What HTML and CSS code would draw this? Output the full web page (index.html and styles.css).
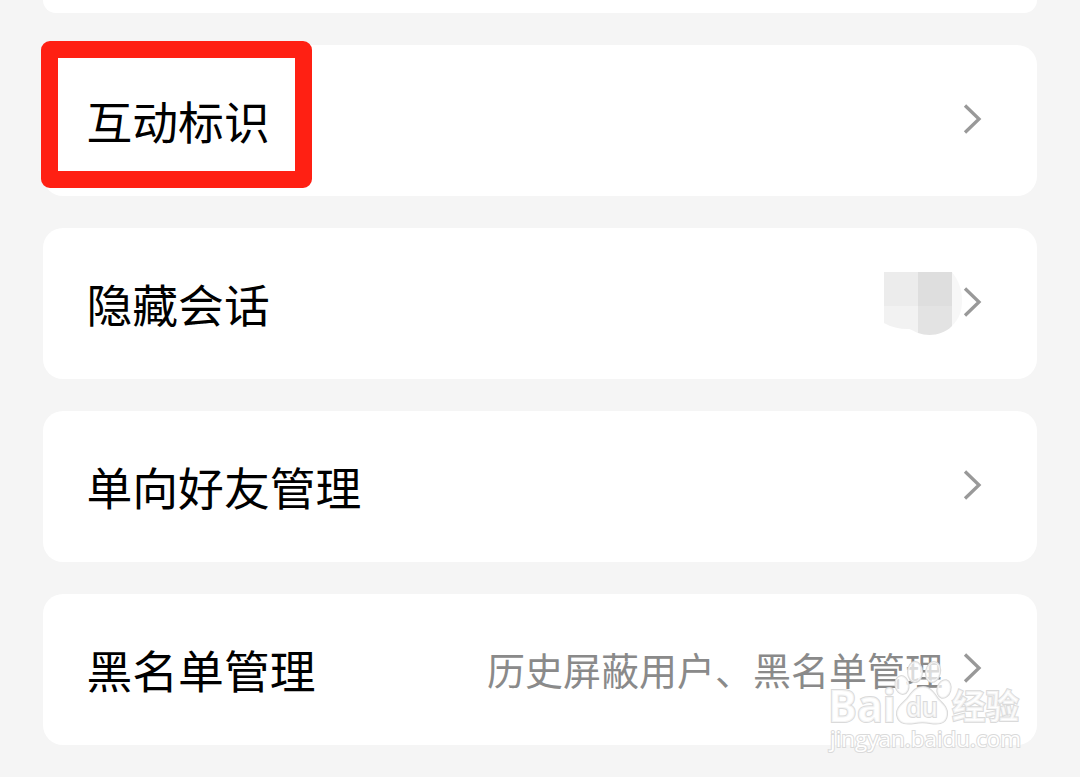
FILE: index.html
```html
<!DOCTYPE html>
<html lang="zh-CN">
<head>
    <meta charset="UTF-8">
    <title>设置</title>
    <link rel="stylesheet" href="styles.css">
</head>
<body>
    <div class="settings">
        <div class="card card-prev"></div>

        <div class="card">
            <span class="label">互动标识</span>
            <svg class="arrow" viewBox="0 0 20 32"><path d="M3 2.5 L17 16 L3 29.5"/></svg>
            <div class="highlight"></div>
        </div>

        <div class="card">
            <span class="label">隐藏会话</span>
            <!-- pixelated avatar -->
            <svg class="mosaic" viewBox="0 0 78 64">
                <path fill="#f7f7f7" d="M68 0 C75 9 78 18 78 29 C78 39 75 47 68 54 Z"/>
                <path fill="#ececec" d="M0 0 H34 V34 H0 Z"/>
                <path fill="#f2f2f2" d="M0 34 H34 V61 C29 59 27 57 24 57 C15 57 7 55 0 51 Z"/>
                <path fill="#dedede" d="M34 0 H68 V34 H34 Z"/>
                <path fill="#e3e3e3" d="M34 34 H68 V54 C59 63 45 65 34 61 Z"/>
            </svg>
            <svg class="arrow" viewBox="0 0 20 32"><path d="M3 2.5 L17 16 L3 29.5"/></svg>
        </div>

        <div class="card">
            <span class="label">单向好友管理</span>
            <svg class="arrow" viewBox="0 0 20 32"><path d="M3 2.5 L17 16 L3 29.5"/></svg>
        </div>

        <div class="card">
            <span class="label">黑名单管理</span>
            <span class="hint">历史屏蔽用户、黑名单管理</span>
            <svg class="arrow" viewBox="0 0 20 32"><path d="M3 2.5 L17 16 L3 29.5"/></svg>
        </div>
    </div>

    <svg class="watermark" viewBox="0 0 210 120">
        <g class="mark">
            <text class="brand" x="4" y="80" textLength="68" lengthAdjust="spacingAndGlyphs">Bai</text>
            <ellipse cx="78" cy="43" rx="6.5" ry="9" transform="rotate(-10 78 43)"/>
            <ellipse cx="91" cy="30" rx="7" ry="10"/>
            <ellipse cx="109" cy="30" rx="7" ry="10" transform="rotate(12 109 30)"/>
            <ellipse cx="120" cy="47" rx="6.5" ry="9" transform="rotate(15 120 47)"/>
            <path d="M99 45 C106 45 110 51 114 57 C119 62 124 66 123 73 C122 83 112 82 106 81 C101 80 96 80 91 81 C84 82 75 83 73 73 C72 66 78 62 83 57 C88 51 91 45 99 45 Z"/>
            <text class="du" x="82" y="75" textLength="32" lengthAdjust="spacingAndGlyphs">du</text>
            <text class="jy" x="128" y="77" textLength="67" lengthAdjust="spacingAndGlyphs">经验</text>
        </g>
        <text class="site" x="6" y="105" textLength="191" lengthAdjust="spacingAndGlyphs">jingyan.baidu.com</text>
    </svg>
</body>
</html>
```

FILE: styles.css
```css
body {
    margin: 0;
    height: 777px;
    overflow: hidden;
    background-color: #f5f5f5;
    font-family: "Noto Sans CJK SC", sans-serif;
}

.settings {
    display: flex;
    flex-direction: column;
    gap: 32px;
    padding: 0 43px;
}

.card {
    position: relative;
    display: flex;
    align-items: center;
    box-sizing: border-box;
    height: 151px;
    padding: 0 55px 3px 43.5px;
    background-color: #fff;
    border-radius: 20px;
}

.card-prev {
    height: 13px;
    padding: 0;
    border-radius: 0 0 20px 20px;
}

.label {
    margin-right: auto;
    font-size: 45.8px;
    line-height: 60px;
    color: #000;
    padding-top: 1px;
}

.hint {
    margin-right: 19px;
    padding-top: 2px;
    font-size: 38px;
    line-height: 50px;
    color: #8a8a8a;
}

.arrow {
    width: 20px;
    height: 32px;
    fill: none;
    stroke: #999;
    stroke-width: 3.3;
}

.mosaic {
    width: 78px;
    height: 64px;
    padding-top: 3px;
}

.highlight {
    position: absolute;
    left: -2px;
    top: -4px;
    width: 237px;
    height: 113px;
    border: 17px solid #ff2013;
    border-radius: 9px;
}

.watermark {
    position: absolute;
    left: 824px;
    top: 642px;
    width: 210px;
    height: 120px;
    fill: #fff;
    stroke: #dadada;
    stroke-width: 2;
    paint-order: stroke;
}

.mark {
    fill-opacity: 0.7;
}

.brand {
    font-family: "Open Sans", sans-serif;
    font-size: 45px;
    font-weight: bold;
}

.du {
    font-family: "Open Sans", sans-serif;
    font-size: 27px;
    font-weight: 600;
}

.jy {
    font-size: 34px;
    font-weight: bold;
}

.site {
    font-family: "Open Sans", sans-serif;
    font-size: 22px;
}
```
